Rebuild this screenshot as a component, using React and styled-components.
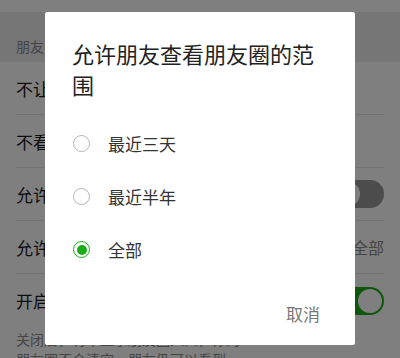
import React, { useState } from "react";
import styled, { createGlobalStyle } from "styled-components";

const GlobalStyle = createGlobalStyle`
  html, body {
    margin: 0;
    padding: 0;
    background: #ffffff;
    font-family: "Noto Sans CJK SC", "Noto Sans", sans-serif;
  }
  * { box-sizing: border-box; }
`;

const Page = styled.div`
  width: 400px;
  height: 358px;
  overflow: hidden;
  background: #ffffff;
  padding-top: 12px;
`;

const SectionHeader = styled.div`
  height: 50px;
  background: #ededed;
  color: #8a8a8a;
  font-size: 14px;
  padding: 26px 16px 0;
  line-height: 16px;
`;

const Row = styled.div`
  height: 53px;
  margin: 0 16px;
  display: flex;
  align-items: center;
  justify-content: space-between;
  font-size: 17px;
  color: #1a1a1a;
  border-bottom: ${(p) => (p.last ? "none" : "1px solid #e5e5e5")};
`;

const RowValue = styled.span`
  color: #8a8a8a;
  font-size: 16px;
`;

const Switch = styled.div`
  width: 50px;
  height: 28px;
  border-radius: 14px;
  position: relative;
  background: ${(p) => (p.on ? "#1aad19" : "#999999")};
  &::after {
    content: "";
    position: absolute;
    top: 2px;
    left: ${(p) => (p.on ? "24px" : "2px")};
    width: 24px;
    height: 24px;
    border-radius: 50%;
    background: #ffffff;
  }
`;

const Note = styled.div`
  padding: 2px 16px 0;
  font-size: 14px;
  line-height: 20px;
  color: #8a8a8a;
`;

const Overlay = styled.div`
  position: fixed;
  inset: 0;
  background: rgba(0, 0, 0, 0.5);
  display: flex;
  justify-content: center;
  align-items: flex-start;
  padding-top: 12px;
`;

const Dialog = styled.div`
  width: 310px;
  height: 333px;
  background: #ffffff;
  border-radius: 2px;
  padding: 26px 35px 0 27px;
  display: flex;
  flex-direction: column;
`;

const Title = styled.div`
  font-size: 22px;
  line-height: 31px;
  color: #222222;
  margin-bottom: 17px;
`;

const Option = styled.div`
  height: 53px;
  display: flex;
  align-items: center;
  gap: 18px;
  font-size: 17px;
  color: #333333;
  cursor: pointer;
`;

const Radio = styled.span`
  width: 17px;
  height: 17px;
  border-radius: 50%;
  margin-left: 1px;
  border: 1.5px solid ${(p) => (p.checked ? "#1aad19" : "#b5b5b5")};
  display: flex;
  align-items: center;
  justify-content: center;
  &::after {
    content: "";
    width: 10px;
    height: 10px;
    border-radius: 50%;
    background: ${(p) => (p.checked ? "#1aad19" : "transparent")};
  }
`;

const Actions = styled.div`
  display: flex;
  justify-content: flex-end;
  margin-top: 25px;
`;

const CancelBtn = styled.span`
  font-size: 17px;
  color: #777777;
  cursor: pointer;
`;

const options = ["最近三天", "最近半年", "全部"];

const App = () => {
  const [selected, setSelected] = useState(2);
  return (
    <>
      <GlobalStyle />
      <Page>
        <SectionHeader>朋友圈权限</SectionHeader>
        <Row>不让他（她）看我的朋友圈</Row>
        <Row>不看他（她）的朋友圈</Row>
        <Row>
          允许陌生人查看十条朋友圈
          <Switch />
        </Row>
        <Row>
          允许朋友查看朋友圈的范围
          <RowValue>全部</RowValue>
        </Row>
        <Row last>
          开启朋友圈入口
          <Switch on />
        </Row>
        <Note>
          关闭后，将不显示朋友圈入口，你的
          <br />
          朋友圈不会清空，朋友仍可以看到
        </Note>
      </Page>
      <Overlay>
        <Dialog>
          <Title>允许朋友查看朋友圈的范围</Title>
          {options.map((label, i) => (
            <Option key={label} onClick={() => setSelected(i)}>
              <Radio checked={selected === i} />
              {label}
            </Option>
          ))}
          <Actions>
            <CancelBtn>取消</CancelBtn>
          </Actions>
        </Dialog>
      </Overlay>
    </>
  );
};

export default App;
